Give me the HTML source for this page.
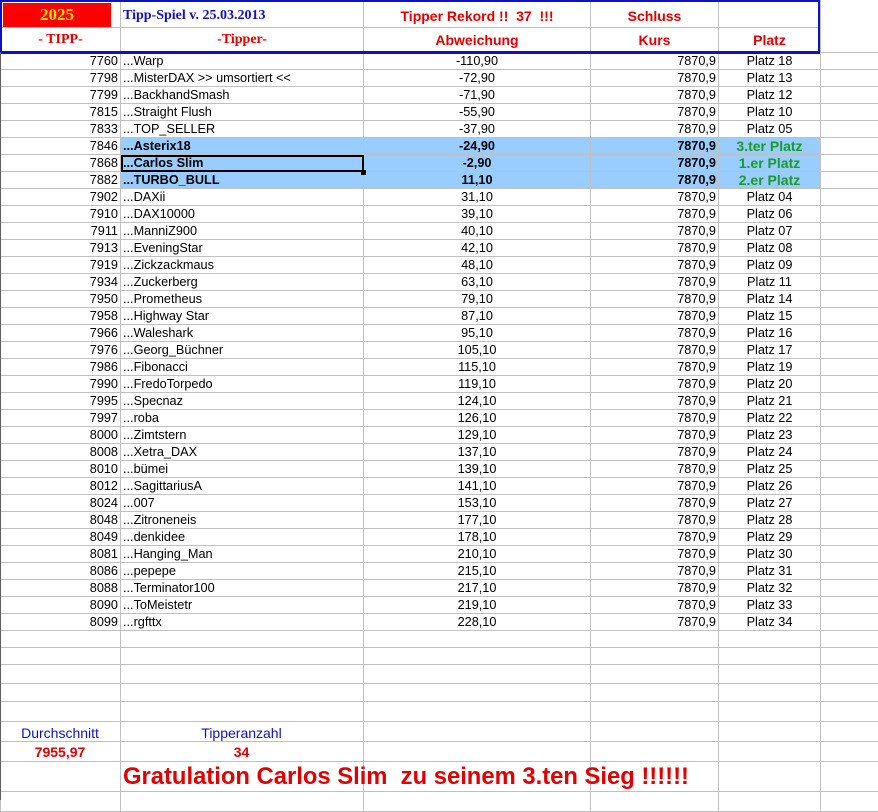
<!DOCTYPE html>
<html><head><meta charset="utf-8"><style>
body{margin:0;width:878px;height:800px;overflow:hidden;background:#fff;font-family:"Liberation Sans",Arial,sans-serif;position:relative}
table{border-collapse:collapse;table-layout:fixed;position:absolute;left:0;top:0;width:878px}
td{border:1px solid #c0c0c0;padding:0 2px;font-size:12.7px;white-space:nowrap;overflow:hidden;line-height:14px;color:#000}
td.a{text-align:right}
td.c{text-align:center}
td.d{text-align:right}
td.e{text-align:center}
tr.d td{height:16px}
tr.h td{background:#99ccff;font-weight:bold}
tr.h td.a,tr.h td.f{background:#fff;font-weight:normal}
tr.h td.e{color:#1a9a2a;font-size:14px}
.ser{font-family:"Liberation Serif",serif;font-weight:bold}
.red{color:#e00000}
.hb{font-weight:bold;color:#e00000;font-size:14px;text-align:center}
.abs{position:absolute;white-space:nowrap}
tr.r2 td{vertical-align:top;padding-top:5px}
</style></head><body>
<table>
<colgroup><col style="width:120px"><col style="width:243px"><col style="width:227px"><col style="width:128px"><col style="width:102px"><col style="width:58px"></colgroup>
<tr style="height:27px"><td style="padding:2px 2px 0 2px;vertical-align:top"><div class="ser" style="background:#ff0000;color:#ffe600;font-size:17px;text-align:center;width:108px;height:24px;line-height:24px">2025</div></td><td class="ser" style="color:#1010c0;font-size:14px;padding-top:4px">Tipp-Spiel v. 25.03.2013</td><td class="hb" style="padding-top:4px">Tipper Rekord !!&nbsp; 37&nbsp; !!!</td><td class="hb" style="padding-top:4px">Schluss</td><td></td><td style="border:none"></td></tr>
<tr class="r2" style="height:25px"><td class="ser red" style="text-align:center;font-size:14px">- TIPP-</td><td class="ser red" style="text-align:center;font-size:14px">-Tipper-</td><td class="hb">Abweichung</td><td class="hb">Kurs</td><td class="hb">Platz</td><td style="border:none"></td></tr>
<tr class="d"><td class="a">7760</td><td>...Warp</td><td class="c">-110,90</td><td class="d">7870,9</td><td class="e">Platz 18</td><td></td></tr>
<tr class="d"><td class="a">7798</td><td>...MisterDAX &gt;&gt; umsortiert &lt;&lt;</td><td class="c">-72,90</td><td class="d">7870,9</td><td class="e">Platz 13</td><td></td></tr>
<tr class="d"><td class="a">7799</td><td>...BackhandSmash</td><td class="c">-71,90</td><td class="d">7870,9</td><td class="e">Platz 12</td><td></td></tr>
<tr class="d"><td class="a">7815</td><td>...Straight Flush</td><td class="c">-55,90</td><td class="d">7870,9</td><td class="e">Platz 10</td><td></td></tr>
<tr class="d"><td class="a">7833</td><td>...TOP_SELLER</td><td class="c">-37,90</td><td class="d">7870,9</td><td class="e">Platz 05</td><td></td></tr>
<tr class="d h"><td class="a">7846</td><td>...Asterix18</td><td class="c">-24,90</td><td class="d">7870,9</td><td class="e">3.ter Platz</td><td class="f"></td></tr>
<tr class="d h"><td class="a">7868</td><td style="outline:2px solid #000;outline-offset:-2px">...Carlos Slim</td><td class="c">-2,90</td><td class="d">7870,9</td><td class="e">1.er Platz</td><td class="f"></td></tr>
<tr class="d h"><td class="a">7882</td><td>...TURBO_BULL</td><td class="c">11,10</td><td class="d">7870,9</td><td class="e">2.er Platz</td><td class="f"></td></tr>
<tr class="d"><td class="a">7902</td><td>...DAXii</td><td class="c">31,10</td><td class="d">7870,9</td><td class="e">Platz 04</td><td></td></tr>
<tr class="d"><td class="a">7910</td><td>...DAX10000</td><td class="c">39,10</td><td class="d">7870,9</td><td class="e">Platz 06</td><td></td></tr>
<tr class="d"><td class="a">7911</td><td>...ManniZ900</td><td class="c">40,10</td><td class="d">7870,9</td><td class="e">Platz 07</td><td></td></tr>
<tr class="d"><td class="a">7913</td><td>...EveningStar</td><td class="c">42,10</td><td class="d">7870,9</td><td class="e">Platz 08</td><td></td></tr>
<tr class="d"><td class="a">7919</td><td>...Zickzackmaus</td><td class="c">48,10</td><td class="d">7870,9</td><td class="e">Platz 09</td><td></td></tr>
<tr class="d"><td class="a">7934</td><td>...Zuckerberg</td><td class="c">63,10</td><td class="d">7870,9</td><td class="e">Platz 11</td><td></td></tr>
<tr class="d"><td class="a">7950</td><td>...Prometheus</td><td class="c">79,10</td><td class="d">7870,9</td><td class="e">Platz 14</td><td></td></tr>
<tr class="d"><td class="a">7958</td><td>...Highway Star</td><td class="c">87,10</td><td class="d">7870,9</td><td class="e">Platz 15</td><td></td></tr>
<tr class="d"><td class="a">7966</td><td>...Waleshark</td><td class="c">95,10</td><td class="d">7870,9</td><td class="e">Platz 16</td><td></td></tr>
<tr class="d"><td class="a">7976</td><td>...Georg_Büchner</td><td class="c">105,10</td><td class="d">7870,9</td><td class="e">Platz 17</td><td></td></tr>
<tr class="d"><td class="a">7986</td><td>...Fibonacci</td><td class="c">115,10</td><td class="d">7870,9</td><td class="e">Platz 19</td><td></td></tr>
<tr class="d"><td class="a">7990</td><td>...FredoTorpedo</td><td class="c">119,10</td><td class="d">7870,9</td><td class="e">Platz 20</td><td></td></tr>
<tr class="d"><td class="a">7995</td><td>...Specnaz</td><td class="c">124,10</td><td class="d">7870,9</td><td class="e">Platz 21</td><td></td></tr>
<tr class="d"><td class="a">7997</td><td>...roba</td><td class="c">126,10</td><td class="d">7870,9</td><td class="e">Platz 22</td><td></td></tr>
<tr class="d"><td class="a">8000</td><td>...Zimtstern</td><td class="c">129,10</td><td class="d">7870,9</td><td class="e">Platz 23</td><td></td></tr>
<tr class="d"><td class="a">8008</td><td>...Xetra_DAX</td><td class="c">137,10</td><td class="d">7870,9</td><td class="e">Platz 24</td><td></td></tr>
<tr class="d"><td class="a">8010</td><td>...bümei</td><td class="c">139,10</td><td class="d">7870,9</td><td class="e">Platz 25</td><td></td></tr>
<tr class="d"><td class="a">8012</td><td>...SagittariusA</td><td class="c">141,10</td><td class="d">7870,9</td><td class="e">Platz 26</td><td></td></tr>
<tr class="d"><td class="a">8024</td><td>...007</td><td class="c">153,10</td><td class="d">7870,9</td><td class="e">Platz 27</td><td></td></tr>
<tr class="d"><td class="a">8048</td><td>...Zitroneneis</td><td class="c">177,10</td><td class="d">7870,9</td><td class="e">Platz 28</td><td></td></tr>
<tr class="d"><td class="a">8049</td><td>...denkidee</td><td class="c">178,10</td><td class="d">7870,9</td><td class="e">Platz 29</td><td></td></tr>
<tr class="d"><td class="a">8081</td><td>...Hanging_Man</td><td class="c">210,10</td><td class="d">7870,9</td><td class="e">Platz 30</td><td></td></tr>
<tr class="d"><td class="a">8086</td><td>...pepepe</td><td class="c">215,10</td><td class="d">7870,9</td><td class="e">Platz 31</td><td></td></tr>
<tr class="d"><td class="a">8088</td><td>...Terminator100</td><td class="c">217,10</td><td class="d">7870,9</td><td class="e">Platz 32</td><td></td></tr>
<tr class="d"><td class="a">8090</td><td>...ToMeistetr</td><td class="c">219,10</td><td class="d">7870,9</td><td class="e">Platz 33</td><td></td></tr>
<tr class="d"><td class="a">8099</td><td>...rgfttx</td><td class="c">228,10</td><td class="d">7870,9</td><td class="e">Platz 34</td><td></td></tr>
<tr style="height:17px"><td></td><td></td><td></td><td></td><td></td><td></td></tr>
<tr style="height:17px"><td></td><td></td><td></td><td></td><td></td><td></td></tr>
<tr style="height:19px"><td></td><td></td><td></td><td></td><td></td><td></td></tr>
<tr style="height:18px"><td></td><td></td><td></td><td></td><td></td><td></td></tr>
<tr style="height:20px"><td></td><td></td><td></td><td></td><td></td><td></td></tr>
<tr style="height:20px"><td></td><td></td><td></td><td></td><td></td><td></td></tr>
<tr style="height:20px"><td></td><td></td><td></td><td></td><td></td><td></td></tr>
<tr style="height:30px"><td></td><td></td><td></td><td></td><td></td><td></td></tr>
<tr style="height:20px"><td></td><td></td><td></td><td></td><td></td><td></td></tr>
</table>
<div class="abs" style="left:0;width:120px;text-align:center;top:725px;color:#1010c0;font-size:14px">Durchschnitt</div>
<div class="abs" style="left:120px;width:243px;text-align:center;top:725px;color:#1010c0;font-size:14px">Tipperanzahl</div>
<div class="abs" style="left:0;width:120px;text-align:center;top:744px;color:#e00000;font-size:14px;font-weight:bold">7955,97</div>
<div class="abs" style="left:120px;width:243px;text-align:center;top:744px;color:#e00000;font-size:14px;font-weight:bold">34</div>
<div class="abs" style="left:123px;top:763px;color:#e00000;font-size:23.8px;font-weight:bold;line-height:28px">Gratulation Carlos Slim&nbsp; zu seinem 3.ten Sieg !!!!!!</div>
<div style="position:absolute;left:0;top:0;width:816px;height:49px;border:2px solid #1010c8;border-bottom-width:3px;pointer-events:none"></div>
<div style="position:absolute;left:0;top:52px;width:1px;height:748px;background:#606060"></div>
<div style="position:absolute;left:361px;top:170px;width:5px;height:5px;background:#000"></div>
</body></html>
